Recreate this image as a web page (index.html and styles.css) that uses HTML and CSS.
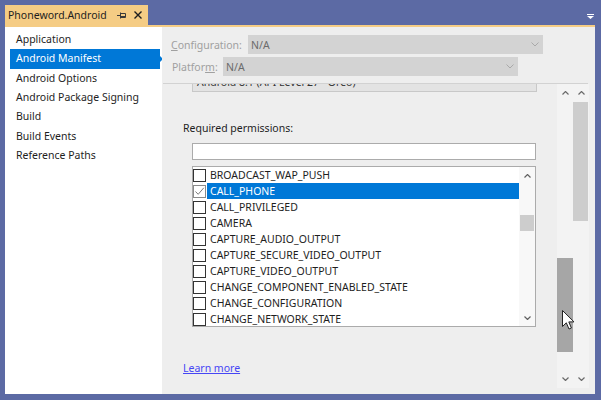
FILE: index.html
```html
<!DOCTYPE html>
<html lang="en">
<head>
<meta charset="utf-8">
<title>Phoneword.Android</title>
<link rel="stylesheet" href="styles.css">
</head>
<body>
<div class="window">
  <div class="tabbar">
    <div class="tab">
      <span class="tab-title">Phoneword.Android</span>
      <svg class="pin" width="9" height="9" viewBox="0 0 9 9"><path d="M0 4.5H3.5M3.5 1.5V7.5M3.5 2.5H8.5V6.5H3.5M3.5 5.5H8.5" fill="none" stroke="#3a3a3a" stroke-width="1"/></svg>
      <svg class="close" width="8" height="8" viewBox="0 0 8 8"><path d="M0.5 0.5L7.5 7.5M7.5 0.5L0.5 7.5" stroke="#1e1e1e" stroke-width="1.4"/></svg>
    </div>
    <div class="tab-spacer"></div>
    <svg class="overflow" width="7" height="5" viewBox="0 0 7 5"><path d="M0 0H7V1H0Z M0 2H7L3.5 5Z" fill="#ffffff"/></svg>
  </div>
  <div class="tabline"></div>
  <div class="content">
    <nav class="sidebar">
      <div class="nav-item">Application</div>
      <div class="nav-item active">Android Manifest</div>
      <div class="nav-item">Android Options</div>
      <div class="nav-item">Android Package Signing</div>
      <div class="nav-item">Build</div>
      <div class="nav-item">Build Events</div>
      <div class="nav-item">Reference Paths</div>
    </nav>
    <section class="main">
      <div class="config">
        <div class="field-row">
          <span class="lbl lbl-config"><u>C</u>onfiguration:</span>
          <div class="select">
            <span>N/A</span>
            <svg class="sel-chev" width="8" height="5" viewBox="0 0 8 5"><path d="M0.5 0.5L4 4L7.5 0.5" fill="none" stroke="#a9a9a9" stroke-width="1"/></svg>
          </div>
        </div>
        <div class="field-row">
          <span class="lbl lbl-platform">Platfor<u>m</u>:</span>
          <div class="select">
            <span>N/A</span>
            <svg class="sel-chev" width="8" height="5" viewBox="0 0 8 5"><path d="M0.5 0.5L4 4L7.5 0.5" fill="none" stroke="#a9a9a9" stroke-width="1"/></svg>
          </div>
        </div>
      </div>
      <div class="divider"></div>
      <div class="scroll-area">
        <div class="page">
          <div class="target-box">Android 8.1 (API Level 27 - Oreo)</div>
          <div class="perm-label">Required permissions:</div>
          <div class="search"></div>
          <div class="listbox">
            <div class="rows">
              <div class="row"><span class="check"></span><span class="row-text">BROADCAST_WAP_PUSH</span></div>
              <div class="row selected"><span class="check checked"><svg width="11" height="11" viewBox="0 0 11 11"><path d="M1.5 5.5L4.2 8.3L9.8 1.8" fill="none" stroke="#7a7a7a" stroke-width="1"/></svg></span><span class="row-text">CALL_PHONE</span></div>
              <div class="row"><span class="check"></span><span class="row-text">CALL_PRIVILEGED</span></div>
              <div class="row"><span class="check"></span><span class="row-text">CAMERA</span></div>
              <div class="row"><span class="check"></span><span class="row-text">CAPTURE_AUDIO_OUTPUT</span></div>
              <div class="row"><span class="check"></span><span class="row-text">CAPTURE_SECURE_VIDEO_OUTPUT</span></div>
              <div class="row"><span class="check"></span><span class="row-text">CAPTURE_VIDEO_OUTPUT</span></div>
              <div class="row"><span class="check"></span><span class="row-text">CHANGE_COMPONENT_ENABLED_STATE</span></div>
              <div class="row"><span class="check"></span><span class="row-text">CHANGE_CONFIGURATION</span></div>
              <div class="row"><span class="check"></span><span class="row-text">CHANGE_NETWORK_STATE</span></div>
            </div>
            <div class="list-scroll">
              <div class="arrow"><svg width="7" height="4" viewBox="0 0 7 4"><path d="M0.5 3.5L3.5 0.5L6.5 3.5" fill="none" stroke="#606060" stroke-width="1.2"/></svg></div>
              <div class="list-thumb"></div>
              <div class="grow"></div>
              <div class="arrow"><svg width="7" height="4" viewBox="0 0 7 4"><path d="M0.5 0.5L3.5 3.5L6.5 0.5" fill="none" stroke="#606060" stroke-width="1.2"/></svg></div>
            </div>
          </div>
          <a class="learn" href="#">Learn more</a>
        </div>
        <div class="vscroll">
          <div class="arrow big"><svg width="7" height="4" viewBox="0 0 7 4"><path d="M0.5 3.5L3.5 0.5L6.5 3.5" fill="none" stroke="#6a6a6a" stroke-width="1.2"/></svg></div>
          <div class="thumb thumb-dark"></div>
          <div class="grow"></div>
          <div class="arrow big"><svg width="7" height="4" viewBox="0 0 7 4"><path d="M0.5 0.5L3.5 3.5L6.5 0.5" fill="none" stroke="#6a6a6a" stroke-width="1.2"/></svg></div>
        </div>
        <div class="vscroll">
          <div class="arrow big"><svg width="7" height="4" viewBox="0 0 7 4"><path d="M0.5 3.5L3.5 0.5L6.5 3.5" fill="none" stroke="#6a6a6a" stroke-width="1.2"/></svg></div>
          <div class="thumb thumb-light"></div>
          <div class="grow"></div>
          <div class="arrow big"><svg width="7" height="4" viewBox="0 0 7 4"><path d="M0.5 0.5L3.5 3.5L6.5 0.5" fill="none" stroke="#6a6a6a" stroke-width="1.2"/></svg></div>
        </div>
      </div>
      <svg class="cursor" width="13" height="20" viewBox="0 0 13 20"><path d="M0.5 0.5V16.5L4.3 12.8L7 19L9.4 18L6.8 11.9H12Z" fill="#ffffff" stroke="#222222" stroke-width="1" stroke-linejoin="round"/></svg>
    </section>
  </div>
</div>
</body>
</html>
```

FILE: styles.css
```css
* { box-sizing: border-box; }

html, body {
  margin: 0;
  padding: 0;
}

body {
  width: 601px;
  height: 400px;
  background: #5c6aa4;
  font-family: "Noto Sans", "Open Sans", sans-serif;
  font-size: 10.5px;
  color: #1e1e1e;
  overflow: hidden;
}

.window {
  height: 400px;
  padding: 5px 6px 6px 5px;
  display: flex;
  flex-direction: column;
}

.tabbar {
  height: 20px;
  display: flex;
  align-items: stretch;
}

.tab {
  width: 143px;
  background: #f5cc84;
  display: flex;
  align-items: center;
  padding-left: 3px;
}

.tab-title {
  flex: 1;
  white-space: nowrap;
  line-height: 20px;
}

.pin {
  margin-right: 8px;
}

.close {
  margin-right: 6px;
}

.tab-spacer {
  flex: 1;
}

.overflow {
  align-self: center;
  margin-top: 3px;
  margin-right: 1px;
}

.tabline {
  height: 2px;
  background: #f5cc84;
}

.content {
  flex: 1;
  display: flex;
  min-height: 0;
}

.sidebar {
  width: 157px;
  background: #ffffff;
  padding-top: 3px;
}

.nav-item {
  height: 19.33px;
  line-height: 19.33px;
  margin-left: 5px;
  width: 150px;
  padding-left: 6px;
  white-space: nowrap;
  position: relative;
}

.nav-item.active {
  background: #0078d7;
  color: #ffffff;
}

.nav-item.active::after {
  content: "";
  position: absolute;
  right: -3px;
  top: 50%;
  margin-top: -3px;
  border-left: 3px solid #0078d7;
  border-top: 3px solid transparent;
  border-bottom: 3px solid transparent;
}

.main {
  flex: 1;
  background: #eeeeee;
  display: flex;
  flex-direction: column;
  position: relative;
  min-width: 0;
}

.config {
  padding: 8px 0 0 9px;
  display: flex;
  flex-direction: column;
  gap: 3px;
}

.field-row {
  height: 19px;
  display: flex;
  align-items: center;
}

.lbl {
  color: #a0a0a0;
  white-space: nowrap;
}

.lbl-config { width: 77px; }
.lbl-platform { width: 52px; padding-left: 1px; }

.select {
  width: 295px;
  height: 19px;
  background: #d3d3d3;
  color: #6b6b6b;
  display: flex;
  align-items: center;
  padding-left: 3px;
}

.sel-chev {
  margin-left: auto;
  margin-right: 4px;
}

.divider {
  height: 1px;
  background: #d2d2d2;
  margin: 7px 7px 0 1px;
}

.scroll-area {
  flex: 1;
  display: flex;
  min-height: 0;
  padding-right: 6px;
}

.page {
  flex: 1;
  overflow: hidden;
  min-width: 0;
}

.target-box {
  margin: -12px 0 0 30px;
  width: 345px;
  height: 20px;
  line-height: 18px;
  background: #e3e3e3;
  border: 1px solid #c8c8c8;
  padding-left: 4px;
  color: #333333;
  white-space: nowrap;
}

.perm-label {
  margin: 28px 0 0 21px;
  line-height: 16px;
}

.search {
  margin: 7px 0 0 30px;
  width: 344px;
  height: 17px;
  background: #ffffff;
  border: 1px solid #ababab;
}

.listbox {
  margin: 6px 0 0 30px;
  width: 344px;
  height: 161px;
  background: #ffffff;
  border: 1px solid #ababab;
  display: flex;
}

.rows {
  flex: 1;
  min-width: 0;
  overflow: hidden;
}

.row {
  height: 16px;
  display: flex;
  align-items: center;
}

.check {
  width: 13px;
  height: 13px;
  border: 1px solid #333333;
  background: #ffffff;
  flex: none;
  display: flex;
}

.check.checked {
  border-color: #8a8a8a;
}

.row-text {
  flex: 1;
  height: 16px;
  line-height: 16px;
  padding-left: 3px;
  margin-left: 1px;
  white-space: nowrap;
}

.row.selected .row-text {
  background: #0078d7;
  color: #ffffff;
}

.list-scroll {
  width: 16px;
  background: #f8f8f8;
  display: flex;
  flex-direction: column;
  align-items: center;
}

.arrow {
  height: 17px;
  width: 100%;
  display: flex;
  align-items: center;
  justify-content: center;
}

.arrow.big {
  height: 18px;
}

.list-thumb {
  margin-top: 31px;
  width: 14px;
  height: 16px;
  background: #cdcdcd;
}

.grow {
  flex: 1;
}

.learn {
  display: inline-block;
  margin: 33px 0 0 21px;
  color: #4646f5;
  text-decoration: underline;
  line-height: 16px;
}

.vscroll {
  width: 16px;
  margin-bottom: 6px;
  background: #f3f3f3;
  display: flex;
  flex-direction: column;
}

.thumb {
  width: 16px;
}

.thumb-dark {
  margin-top: 156px;
  height: 94px;
  background: #a6a6a6;
}

.thumb-light {
  width: 15px;
  height: 119px;
  background: #cdcdcd;
}

.cursor {
  position: absolute;
  left: 400px;
  top: 283px;
}
```
